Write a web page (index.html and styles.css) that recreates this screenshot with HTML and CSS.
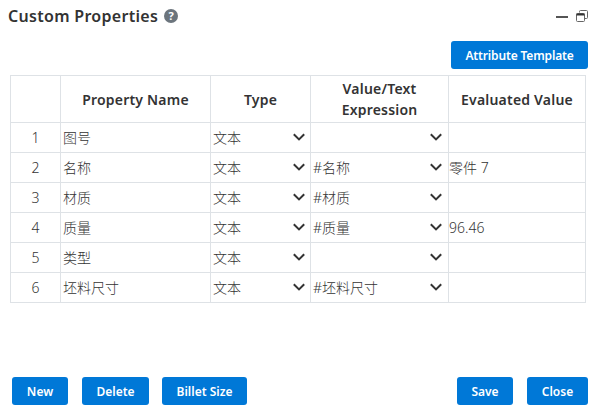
FILE: index.html
```
<!DOCTYPE html>
<html lang="en">
<head>
    <meta charset="UTF-8">
    <meta name="viewport" content="width=device-width, initial-scale=1.0">
    <title>Custom Properties</title>
    <link rel="stylesheet" href="styles.css">
</head>
<body>
    <div class="dialog">
        <div class="header">
            <h1 class="title">Custom Properties</h1>
            <span class="help">?</span>
            <div class="window-buttons">
                <svg width="12" height="14" viewBox="0 0 12 14"><path d="M0 8h12" stroke="#555" stroke-width="2"/></svg>
                <svg width="12" height="14" viewBox="0 0 12 14" fill="none" stroke="#666">
                    <path d="M3.5 3.5V2.5a1 1 0 0 1 1-1h6a1 1 0 0 1 1 1v6a1 1 0 0 1-1 1h-1.5"/>
                    <rect x="0.5" y="4.5" width="8" height="8" rx="1"/>
                    <path d="M0.5 5.5h8" stroke="#333" stroke-width="2"/>
                </svg>
            </div>
        </div>

        <div class="toolbar">
            <button class="button template">Attribute Template</button>
        </div>

        <table class="properties">
            <colgroup>
                <col class="col-index">
                <col class="col-name">
                <col class="col-type">
                <col class="col-value">
                <col class="col-result">
            </colgroup>
            <thead>
                <tr>
                    <th></th>
                    <th>Property Name</th>
                    <th>Type</th>
                    <th>Value/Text Expression</th>
                    <th>Evaluated Value</th>
                </tr>
            </thead>
            <tbody id="rows"></tbody>
        </table>

        <div class="footer">
            <button class="button new">New</button>
            <button class="button delete">Delete</button>
            <button class="button billet">Billet Size</button>
            <button class="button save">Save</button>
            <button class="button close">Close</button>
        </div>
    </div>

    <script>
        const properties = [
            { name: '图号', type: '文本', value: '', result: '' },
            { name: '名称', type: '文本', value: '#名称', result: '零件 7' },
            { name: '材质', type: '文本', value: '#材质', result: '' },
            { name: '质量', type: '文本', value: '#质量', result: '96.46' },
            { name: '类型', type: '文本', value: '', result: '' },
            { name: '坯料尺寸', type: '文本', value: '#坯料尺寸', result: '' }
        ];

        // Cell with a drop-down arrow
        function selectCell(text, name) {
            return `<td><div class="select ${name}"><span>${text}</span><svg class="arrow" width="12" height="8" viewBox="0 0 12 8"><path d="M0.8 1.2L6 6.4L11.2 1.2"/></svg></div></td>`;
        }

        document.getElementById('rows').innerHTML = properties.map((p, i) => `
            <tr>
                <td class="index">${i + 1}</td>
                <td class="name">${p.name}</td>
                ${selectCell(p.type, 'type')}
                ${selectCell(p.value, 'value')}
                <td class="result">${p.result}</td>
            </tr>`).join('');
    </script>
</body>
</html>
```
FILE: styles.css
```
* {
    box-sizing: border-box;
}
body {
    margin: 0;
    background: #fff;
    color: #333;
    font-family: "Noto Sans", "Noto Sans CJK SC", sans-serif;
    font-size: 14px;
}
.dialog {
    display: flex;
    flex-direction: column;
    height: 415px;
    overflow: hidden;
}
.header {
    display: flex;
    align-items: center;
    height: 32px;
    padding: 0 9px 0 8px;
}
.title {
    margin: 0;
    font-size: 16px;
    font-weight: 600;
    line-height: 22px;
    letter-spacing: 0.3px;
    white-space: nowrap;
}
.help {
    width: 14px;
    height: 14px;
    margin-left: 6px;
    border-radius: 50%;
    background: #6c757d;
    color: #fff;
    font-size: 11px;
    font-weight: 700;
    line-height: 14px;
    text-align: center;
}
.window-buttons {
    display: flex;
    gap: 8px;
    margin-left: auto;
}
.toolbar {
    display: flex;
    justify-content: flex-end;
    padding: 9px 9px 6px;
}
.button {
    height: 28px;
    padding: 0;
    border: none;
    border-radius: 3px;
    background: #0078d7;
    color: #fff;
    font-family: inherit;
    font-size: 12px;
    font-weight: 600;
    white-space: nowrap;
    cursor: pointer;
}
.button:hover {
    background: #0067b8;
}
.template {
    width: 137px;
    letter-spacing: -0.15px;
}
.properties {
    width: 576px;
    margin-left: 10px;
    border-collapse: collapse;
    table-layout: fixed;
}
.col-index {
    width: 50px;
}
.col-name {
    width: 150px;
}
.col-type {
    width: 100px;
}
.col-value {
    width: 138px;
}
.properties th,
.properties td {
    height: 30px;
    padding: 0 2px;
    border: 1px solid #dee2e6;
    line-height: 21px;
}
.properties td {
    font-weight: 300;
}
.properties th {
    height: 47px;
    font-weight: 600;
    letter-spacing: 0.2px;
    text-align: center;
}
.properties .index {
    text-align: center;
}
.properties .result {
    padding-left: 0;
}
.select {
    display: flex;
    align-items: center;
    justify-content: space-between;
    height: 21px;
    padding-right: 3px;
}
.select.value {
    padding-right: 4px;
}
.arrow {
    margin-bottom: 2px;
    fill: none;
    stroke: #333;
    stroke-width: 2;
}
.footer {
    display: flex;
    margin-top: auto;
    padding: 0 9px 10px 12px;
}
.new,
.save {
    width: 56px;
}
.delete {
    width: 67px;
    margin: 0 13px 0 14px;
}
.billet {
    width: 85px;
}
.save {
    margin-left: auto;
}
.close {
    width: 61px;
    margin-left: 14px;
}
```
